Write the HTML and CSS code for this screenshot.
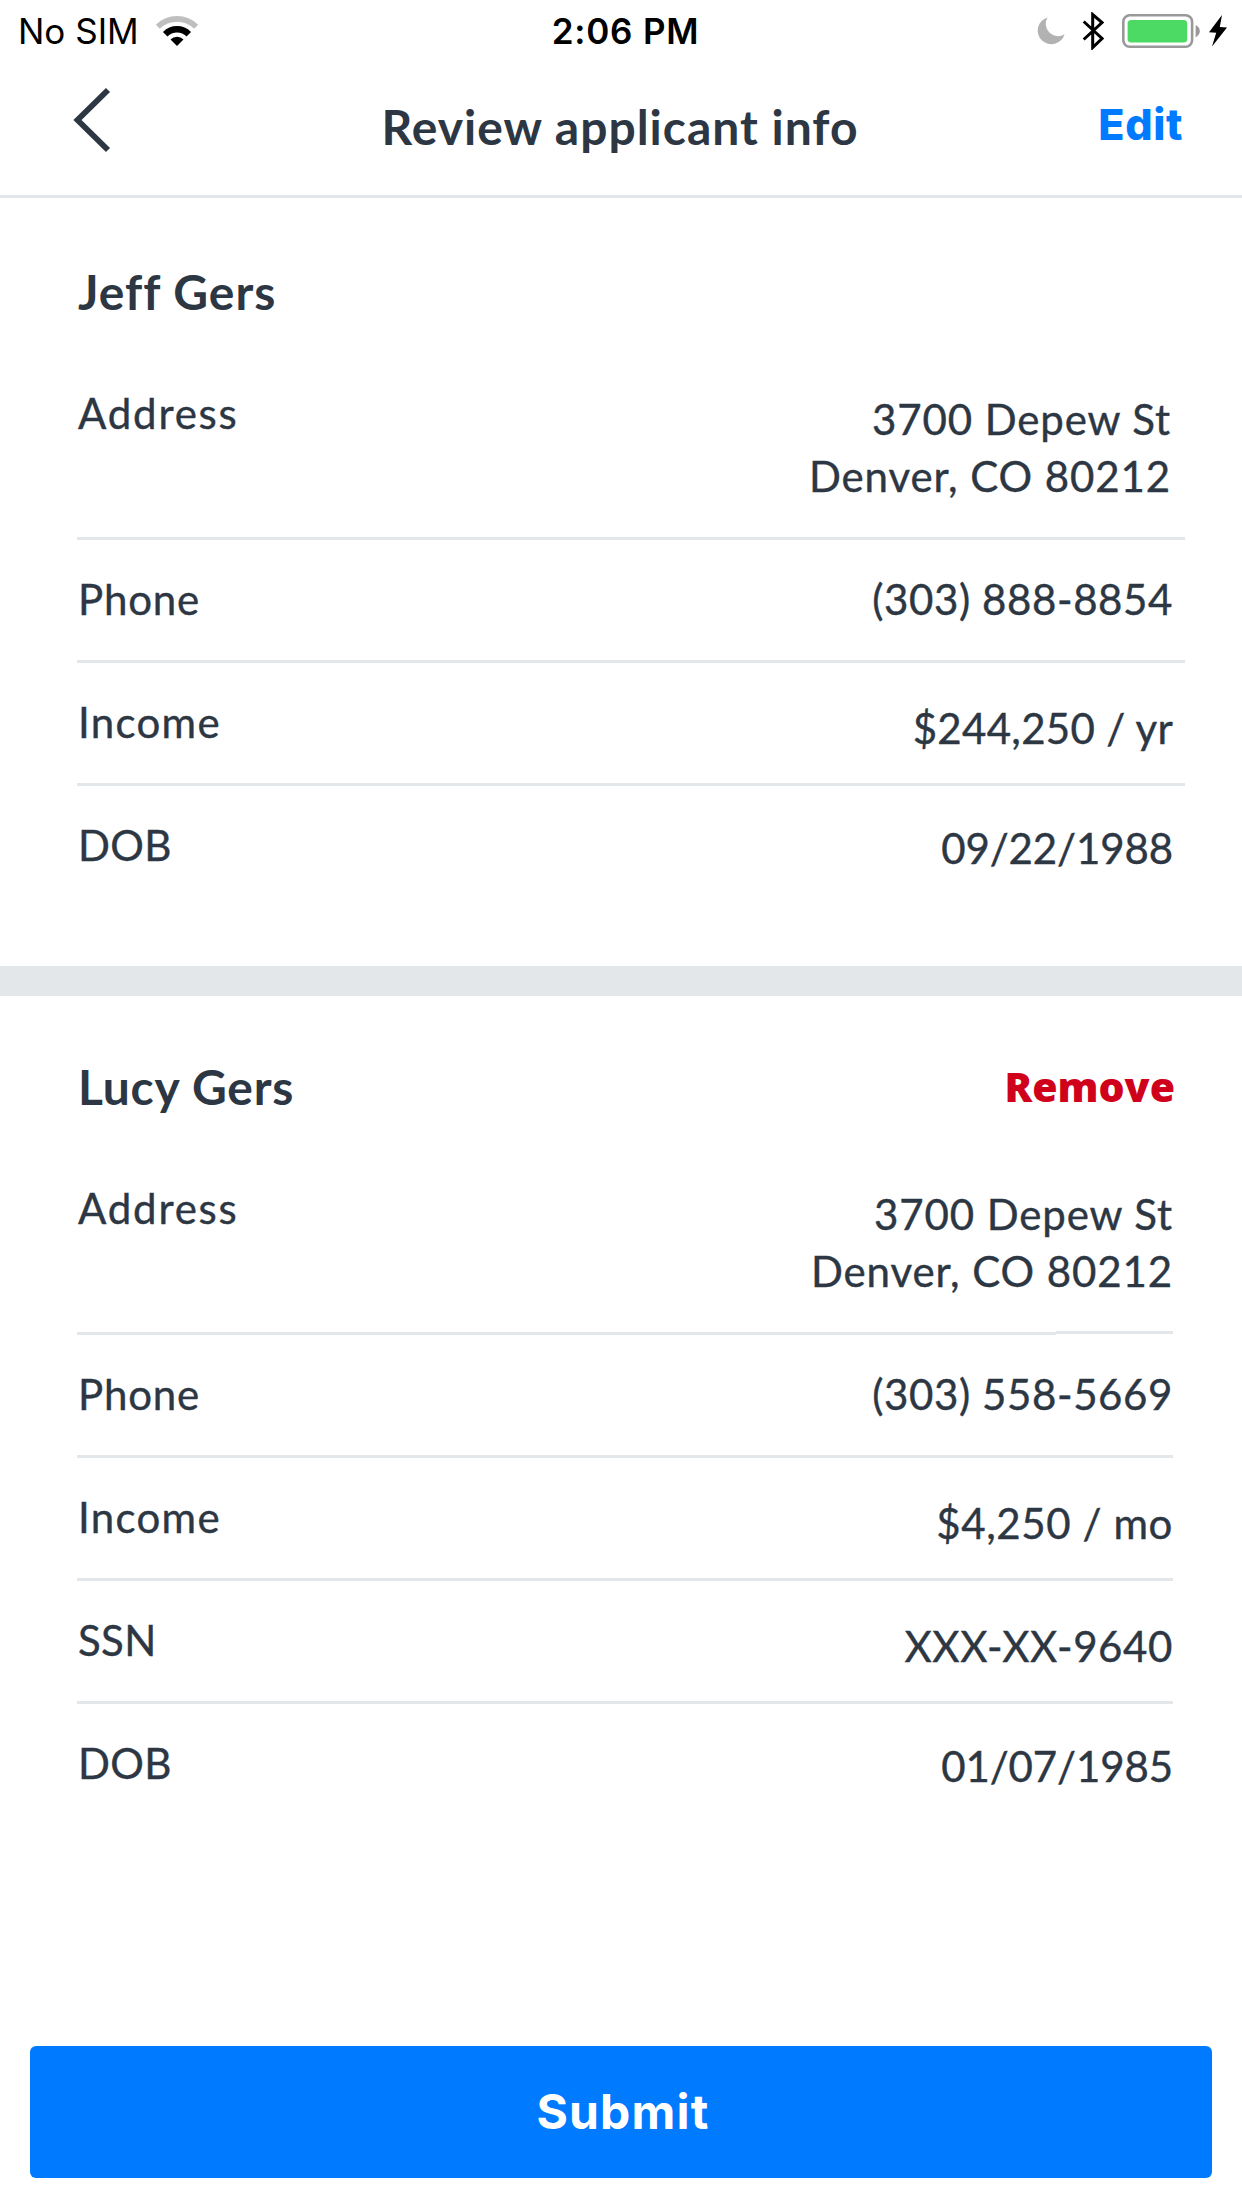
FILE: index.html
```html
<!DOCTYPE html>
<html lang="en">
<head>
<meta charset="utf-8">
<title>Review applicant info</title>
<link rel="stylesheet" href="styles.css">
</head>
<body>
<div class="status-bar">
  <div class="status-left">
    <span class="carrier">No SIM</span>
    <svg class="wifi" width="44" height="32" viewBox="0 0 44 32">
      <path d="M2.8 11.8A27.2 27.2 0 0 1 41.2 11.8" fill="none" stroke="#bfbfbf" stroke-width="5.6"/>
      <path d="M10.2 19.2A16.7 16.7 0 0 1 33.8 19.2" fill="none" stroke="#000" stroke-width="6.4"/>
      <path d="M22 31L15.5 24.5A9.2 9.2 0 0 1 28.5 24.5Z"/>
    </svg>
  </div>
  <span class="time">2:06 PM</span>
  <div class="status-right">
    <svg width="28" height="28" viewBox="0 0 28 28">
      <path d="M10.6 .4A13.7 13.7 0 1 0 27.6 17.3A12.3 12.3 0 0 1 10.6 .4Z" fill="#b2b2b2"/>
    </svg>
    <svg class="bluetooth" width="22" height="38" viewBox="0 0 22 38">
      <path d="M1.7 9.5L20 26.5L10.7 35.5V2.5L20 10.5L1.7 27.5" fill="none" stroke="#000" stroke-width="3"/>
    </svg>
    <svg class="battery" width="78" height="34" viewBox="0 0 78 34">
      <rect x="1.3" y="1.3" width="68.8" height="31.4" rx="6.5" fill="none" stroke="#999" stroke-width="2.6"/>
      <rect x="5.6" y="6" width="59.6" height="22.4" rx="3.5" fill="#4cd964"/>
      <path d="M73.6 11Q77.8 13 77.8 17T73.6 23.4Z" fill="#999"/>
    </svg>
    <svg class="bolt" width="20" height="32" viewBox="0 0 20 32">
      <path d="M14 0L1 17.3L8.2 17.8L4 31.6L19 12.4L11.8 12Z"/>
    </svg>
  </div>
</div>

<header class="nav">
  <svg class="back" width="40" height="66" viewBox="0 0 40 66">
    <path d="M35 3L4.5 33L35 63" fill="none" stroke="#2d3743" stroke-width="5.8"/>
  </svg>
  <h1 class="nav-title">Review applicant info</h1>
  <a class="edit">Edit</a>
</header>

<main class="content">
  <section class="applicant primary">
    <div class="applicant-head"><h2 class="name jeff">Jeff Gers</h2></div>
    <div class="row"><span class="label address">Address</span><span class="value place drop-6">3700 Depew St<br>Denver, CO 80212</span></div>
    <div class="row"><span class="label phone">Phone</span><span class="value tel">(303) 888-8854</span></div>
    <div class="row"><span class="label income">Income</span><span class="value yearly drop-6">$244,250 / yr</span></div>
    <div class="row"><span class="label code">DOB</span><span class="value date drop-3">09/22/1988</span></div>
  </section>
  <section class="applicant secondary">
    <div class="applicant-head"><h2 class="name lucy">Lucy Gers</h2><a class="remove">Remove</a></div>
    <div class="row stepped"><span class="label address">Address</span><span class="value place drop-6">3700 Depew St<br>Denver, CO 80212</span></div>
    <div class="row"><span class="label phone">Phone</span><span class="value tel">(303) 558-5669</span></div>
    <div class="row"><span class="label income">Income</span><span class="value drop-6">$4,250 / mo</span></div>
    <div class="row"><span class="label code">SSN</span><span class="value drop-6">XXX-XX-9640</span></div>
    <div class="row"><span class="label code">DOB</span><span class="value date drop-3">01/07/1985</span></div>
  </section>
</main>

<footer class="actions"><button class="submit">Submit</button></footer>
</body>
</html>
```
FILE: styles.css
```css
* { box-sizing: border-box; }

body {
  margin: 0;
  height: 2208px;
  display: flex;
  flex-direction: column;
  background: #fff;
  color: #2d3743;
  font-family: Lato, "Liberation Sans", sans-serif;
  font-size: 42px;
  line-height: 57px;
}

svg { display: block; flex: none; }
h1, h2 { margin: 0; }

/* Status bar */
.status-bar {
  height: 60px;
  display: grid;
  grid-template-columns: 1fr auto 1fr;
  align-items: center;
  padding: 0 14px 0 18px;
  color: #000;
  font-family: Inter, "Liberation Sans", sans-serif;
  font-size: 35px;
  line-height: 62px;
}
.status-left { display: flex; align-items: center; gap: 16px; }
.time { padding-left: 5px; font-weight: 600; letter-spacing: 0.8px; }
.status-right { display: flex; justify-content: flex-end; align-items: center; }
.bluetooth { margin-left: 17px; }
.battery { margin-left: 18px; }
.bolt { margin-left: 8px; }

/* Navigation */
.nav {
  height: 138px;
  display: grid;
  grid-template-columns: 1fr auto 1fr;
  align-items: start;
  padding: 27px 59px 0;
  border-bottom: 3px solid #e3e7ea;
}
.back { margin-left: 14px; }
.nav-title { font-size: 48px; line-height: 58px; font-weight: 700; padding: 11px 2px 0 0; letter-spacing: 1px; }
.edit {
  justify-self: end;
  padding-top: 8px;
  color: #007aff;
  font-family: Inter, "Liberation Sans", sans-serif;
  font-size: 43px;
  font-weight: 800;
  letter-spacing: 0.6px;
  line-height: 58px;
}

/* Applicants */
.content { flex: 1; }
.applicant { padding-left: 77px; }
.primary { height: 798px; padding-right: 57px; border-bottom: 30px solid #e3e7ea; }
.secondary { padding-right: 69px; }
.applicant-head { display: flex; justify-content: space-between; height: 156px; padding-top: 65px; }
.secondary .applicant-head { height: 153px; padding-top: 62px; }
.name { padding-left: 1px; font-size: 48px; font-weight: 700; }
.jeff { letter-spacing: 1px; }
.lucy { letter-spacing: 0.8px; }
.remove {
  margin-right: -2px;
  color: #d0021b;
  font-family: "Open Sans", "Liberation Sans", sans-serif;
  font-size: 41px;
  font-weight: 800;
}

.row {
  display: flex;
  justify-content: space-between;
  min-height: 123px;
  padding-top: 31px;
  border-bottom: 3px solid #e3e7ea;
}
.row:nth-child(2) { height: 186px; }
.row:last-child { border-bottom: 0; }
.stepped {
  border-bottom: 0;
  background:
    linear-gradient(#e3e7ea, #e3e7ea) 0 183px / 979px 3px no-repeat,
    linear-gradient(#e3e7ea, #e3e7ea) 979px 182px / 118px 3px no-repeat;
}
.label, .value { -webkit-text-stroke: 0.4px #2d3743; }
.label { padding-left: 1px; letter-spacing: 0.8px; }
.address { letter-spacing: 1.8px; }
.income { letter-spacing: 1.3px; }
.code { letter-spacing: 0.3px; }
.value { text-align: right; letter-spacing: 0.6px; }
.place { letter-spacing: 0.9px; }
.yearly { letter-spacing: 0.3px; }
.date { letter-spacing: -0.1px; }
.drop-6 { padding-top: 6px; }
.drop-3 { padding-top: 3px; }
.primary .value { padding-right: 12px; }
.primary .place { padding-right: 14px; }

/* Submit */
.actions { height: 162px; padding: 0 30px; }
.submit {
  width: 100%;
  height: 132px;
  padding: 0 0 0 4px;
  border: 0;
  border-radius: 6px;
  background: #007aff;
  color: #fff;
  font: 700 48px/132px Inter, "Liberation Sans", sans-serif;
  letter-spacing: 1.2px;
}
```
